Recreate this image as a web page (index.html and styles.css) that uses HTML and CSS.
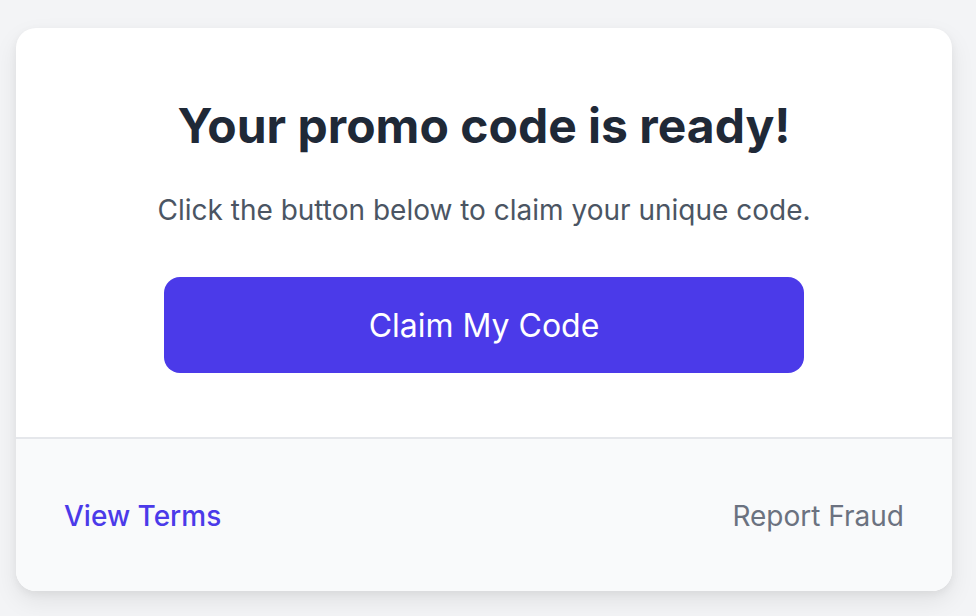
FILE: index.html
```html
<!DOCTYPE html>
<html lang="en">
<head>
    <meta charset="UTF-8">
    <meta name="viewport" content="width=device-width, initial-scale=1.0">
    <title>Promo Code</title>
    <link rel="stylesheet" href="styles.css">
</head>
<body>
    <div class="page">
        <div class="card">
            <div class="card-body">
                <h1>Your promo code is ready!</h1>
                <p class="subtitle">Click the button below to claim your unique code.</p>
                <button class="claim-btn">Claim My Code</button>
            </div>
            <div class="card-footer">
                <a href="#" class="terms-link">View Terms</a>
                <a href="#" class="fraud-link">Report Fraud</a>
            </div>
        </div>
    </div>
</body>
</html>
```

FILE: styles.css
```css
* {
    margin: 0;
    padding: 0;
    box-sizing: border-box;
    font-family: 'Inter', 'Liberation Sans', sans-serif;
}
body {
    background: #f3f4f6;
    min-height: 100vh;
}
.page {
    padding: 28px 24px 26px 16px;
}
.card {
    background: #fff;
    border-radius: 20px;
    overflow: hidden;
    box-shadow: 0 10px 24px rgba(0,0,0,0.08), 0 3px 8px rgba(0,0,0,0.05);
}
.card-body {
    padding: 68px 48px 64px;
    text-align: center;
}
.card-body h1 {
    font-size: 48px;
    line-height: 60px;
    font-weight: 700;
    color: #1f2937;
}
.subtitle {
    margin-top: 34px;
    font-size: 28px;
    line-height: 40px;
    color: #4b5563;
}
.claim-btn {
    margin-top: 47px;
    width: 640px;
    height: 96px;
    border: none;
    border-radius: 16px;
    background: #4b3ae9;
    color: #fff;
    font-size: 32px;
    cursor: pointer;
}
.card-footer {
    display: flex;
    justify-content: space-between;
    align-items: center;
    padding: 63px 48px 61px;
    background: #f9fafb;
    border-top: 2px solid #e5e7eb;
}
.card-footer a {
    font-size: 28px;
    line-height: 28px;
    text-decoration: none;
}
.terms-link {
    color: #4b3ae9;
    font-weight: 500;
}
.fraud-link {
    color: #6b7280;
}
```
